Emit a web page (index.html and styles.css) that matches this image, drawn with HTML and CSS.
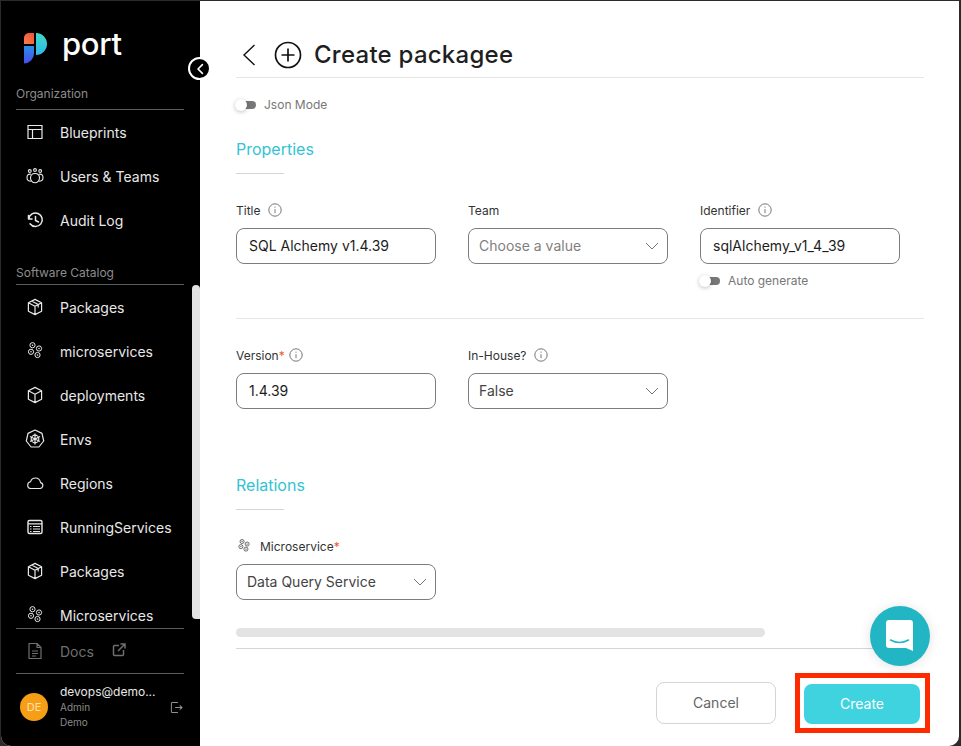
FILE: index.html
```html
<!DOCTYPE html>
<html lang="en">
<head>
<meta charset="utf-8">
<title>Create packagee</title>
<link rel="stylesheet" href="styles.css">
</head>
<body>
<svg class="defs" width="0" height="0" aria-hidden="true">
  <defs>
    <linearGradient id="lg-orange" x1="0" y1="1" x2="1" y2="0"><stop offset="0" stop-color="#f9804a"/><stop offset="1" stop-color="#f0503a"/></linearGradient>
    <linearGradient id="lg-teal" x1="0" y1="0" x2="0" y2="1"><stop offset="0" stop-color="#3fdcc6"/><stop offset="1" stop-color="#2fb6ea"/></linearGradient>
    <linearGradient id="lg-blue" x1="0" y1="0" x2="0" y2="1"><stop offset="0" stop-color="#2a8fe8"/><stop offset="1" stop-color="#4a4cf0"/></linearGradient>
    <symbol id="box" viewBox="0 0 18 18"><path d="M9 1.400l6.600 3.300v8.600L9 16.600l-6.600-3.300V4.700z M2.400 4.700L9 8.200l6.600-3.500 M9 8.200v8.400" fill="none" stroke="currentColor" stroke-width="1.200" stroke-linejoin="round"/></symbol>
    <symbol id="pkg" viewBox="0 0 18 18"><path d="M9 1.400l6.600 3.300v8.600L9 16.600l-6.600-3.300V4.700z M2.400 4.700L9 8.200l6.600-3.500 M9 8.200v8.400 M5.600 3L12.200 6.500v3" fill="none" stroke="currentColor" stroke-width="1.200" stroke-linejoin="round"/></symbol>
    <symbol id="micro" viewBox="0 0 18 18"><g fill="none" stroke="currentColor" stroke-width="1"><circle cx="6.500" cy="3.200" r="2.600"/><circle cx="5" cy="9.800" r="2.600"/><circle cx="13" cy="6.500" r="2.600"/><circle cx="11.500" cy="13" r="2.600"/></g><g fill="currentColor"><circle cx="6.500" cy="3.200" r=".8"/><circle cx="5" cy="9.800" r=".8"/><circle cx="13" cy="6.500" r=".8"/><circle cx="11.500" cy="13" r=".8"/></g></symbol>
    <symbol id="info" viewBox="0 0 14 14"><circle cx="7" cy="7" r="6.200" fill="none" stroke="currentColor" stroke-width=".9"/><path d="M7 6.200v4" stroke="currentColor" stroke-width=".9" fill="none"/><circle cx="7" cy="4.100" r=".6" fill="currentColor"/></symbol>
    <symbol id="chev" viewBox="0 0 14 8"><path d="M1 1l6 6 6-6" fill="none" stroke="currentColor" stroke-width=".9"/></symbol>
  </defs>
</svg>
<div class="app">
  <aside class="sidebar">
    <div class="logo">
      <svg class="logo-mark" viewBox="0 0 24 31" width="24" height="31">
        <path d="M0 11V5a5 5 0 0 1 5-5h5v11z" fill="url(#lg-orange)"/>
        <path d="M12 0a11 11 0 0 1 0 22z" fill="url(#lg-teal)"/>
        <path d="M0 13h10v7.500a10 10 0 0 1-10 10z" fill="url(#lg-blue)"/>
      </svg>
      <span class="logo-text">port</span>
    </div>
    <button class="collapse" aria-label="Collapse">
      <svg viewBox="0 0 10 14" width="8" height="12"><path d="M8 1.500L2.500 7 8 12.500" fill="none" stroke="#fff" stroke-width="2" stroke-linecap="round" stroke-linejoin="round"/></svg>
    </button>
    <div class="section-title org">Organization</div>
    <nav class="nav">
      <a class="nav-item"><svg class="nav-icon" viewBox="0 0 18 18"><path d="M2 2.500h14v13H2z M2 6.500h14 M6.500 6.500v9" fill="none" stroke="currentColor" stroke-width="1.200"/></svg>Blueprints</a>
      <a class="nav-item"><svg class="nav-icon" viewBox="0 0 18 18"><g fill="none" stroke="currentColor" stroke-width="1.100"><circle cx="3.800" cy="4" r="1.400"/><circle cx="9" cy="3" r="1.400"/><circle cx="14.200" cy="4" r="1.400"/><path d="M5 7.200C2 6.800 1 8.500 1 10.500c0 2.500 1.500 3.800 4 3.800"/><path d="M13 7.200c3-.4 4 1.300 4 3.300 0 2.500-1.500 3.800-4 3.800"/><path d="M9 6.500c-3 0-4.500 2-4.500 4.500S6.500 15.800 9 15.800s4.500-2.300 4.500-4.800S12 6.500 9 6.500z"/></g></svg>Users &amp; Teams</a>
      <a class="nav-item"><svg class="nav-icon" viewBox="0 0 18 18"><path d="M2.500 4.500V8H6 M2.700 8A6.800 6.800 0 1 1 4 12.800 M9.500 5.500V9.500L12.500 11" fill="none" stroke="currentColor" stroke-width="1.500" stroke-linecap="round" stroke-linejoin="round"/></svg>Audit Log</a>
    </nav>
    <div class="section-title catalog">Software Catalog</div>
    <div class="catalog-scroll">
      <nav class="nav">
        <a class="nav-item"><svg class="nav-icon"><use href="#pkg"/></svg>Packages</a>
        <a class="nav-item"><svg class="nav-icon"><use href="#micro"/></svg>microservices</a>
        <a class="nav-item"><svg class="nav-icon"><use href="#box"/></svg>deployments</a>
        <a class="nav-item"><svg class="nav-icon big" viewBox="0 0 20 20"><g fill="none" stroke="currentColor" stroke-width="1.200" stroke-linejoin="round"><path d="M10 1l7 3.400 1.700 7.600-4.800 6H6.100l-4.800-6L3 4.400z"/><circle cx="10" cy="10" r="3.800"/><path d="M10 4.500v11 M5 7.500l10 5 M15 7.500l-10 5"/></g></svg>Envs</a>
        <a class="nav-item"><svg class="nav-icon" viewBox="0 0 18 18"><path d="M4.500 14.500h9.500a3 3 0 0 0 .6-5.900C14 6 12 4 9.500 4 7 4 5.200 5.500 4.500 7.800a3.400 3.400 0 0 0 0 6.700z" fill="none" stroke="currentColor" stroke-width="1.100"/></svg>Regions</a>
        <a class="nav-item"><svg class="nav-icon" viewBox="0 0 18 18"><rect x="2" y="2.500" width="14" height="13" rx="1.500" fill="none" stroke="currentColor" stroke-width="1.400"/><path d="M2 5.800h14 M7 8.500h7 M7 11h7 M7 13.500h7 M4 8.500h1.500 M4 11h1.500 M4 13.500h1.500" fill="none" stroke="currentColor" stroke-width="1.200"/></svg>RunningServices</a>
        <a class="nav-item"><svg class="nav-icon"><use href="#pkg"/></svg>Packages</a>
        <a class="nav-item"><svg class="nav-icon"><use href="#micro"/></svg>Microservices</a>
      </nav>
    </div>
    <div class="scroll-thumb"></div>
    <div class="docs">
      <svg class="nav-icon" viewBox="0 0 18 18"><path d="M3 1.500h8l4 4v11H3z M11 1.500v4h4 M6 9h6 M6 11.500h6 M6 14h4" fill="none" stroke="currentColor" stroke-width="1.200" stroke-linejoin="round"/></svg>
      <span>Docs</span>
      <svg class="ext" viewBox="0 0 14 14" width="14" height="14"><path d="M7 2.500H2.500a1 1 0 0 0-1 1v8a1 1 0 0 0 1 1h8a1 1 0 0 0 1-1V7 M6 8L12.500 1.500 M8.500 1h4.500v4.500" fill="none" stroke="currentColor" stroke-width="1.500"/></svg>
    </div>
    <div class="user">
      <div class="avatar">DE</div>
      <div class="user-info">
        <div class="user-name">devops@demo...</div>
        <div class="user-meta">Admin</div>
        <div class="user-meta">Demo</div>
      </div>
      <svg class="logout" viewBox="0 0 14 14" width="13" height="13"><path d="M8.500 1.500H2.500a1 1 0 0 0-1 1v9a1 1 0 0 0 1 1h6 M5.500 7h7.500 M10.500 4.800L13 7l-2.500 2.200" fill="none" stroke="currentColor" stroke-width="1.100"/></svg>
    </div>
  </aside>

  <main class="main">
    <header class="page-header">
      <svg class="back" viewBox="0 0 14 24" width="14" height="24"><path d="M12.500 2L2 12l10.500 10" fill="none" stroke="#111" stroke-width="1.400"/></svg>
      <svg class="plus" viewBox="0 0 28 28" width="28" height="28"><circle cx="14" cy="14" r="12.500" fill="none" stroke="#111" stroke-width="1.700"/><path d="M14 7.500v13 M7.500 14h13" stroke="#111" stroke-width="1.700"/></svg>
      <h1 class="page-title">Create packagee</h1>
    </header>
    <div class="toggle-row json">
      <span class="toggle"><span class="knob"></span></span>
      <span class="toggle-label">Json Mode</span>
    </div>

    <h2 class="group-title properties">Properties</h2>
    <div class="short-rule"></div>

    <div class="form-grid first">
      <div class="field">
        <label class="label">Title <svg class="info"><use href="#info"/></svg></label>
        <div class="control"><span class="value">SQL Alchemy v1.4.39</span></div>
      </div>
      <div class="field">
        <label class="label">Team</label>
        <div class="control select"><span class="placeholder">Choose a value</span><svg class="chev"><use href="#chev"/></svg></div>
      </div>
      <div class="field">
        <label class="label">Identifier <svg class="info"><use href="#info"/></svg></label>
        <div class="control"><span class="value">sqlAlchemy_v1_4_39</span></div>
        <div class="toggle-row auto">
          <span class="toggle"><span class="knob"></span></span>
          <span class="toggle-label">Auto generate</span>
        </div>
      </div>
    </div>
    <div class="rule"></div>
    <div class="form-grid second">
      <div class="field">
        <label class="label">Version<span class="req">*</span> <svg class="info"><use href="#info"/></svg></label>
        <div class="control"><span class="value">1.4.39</span></div>
      </div>
      <div class="field">
        <label class="label">In-House? <svg class="info"><use href="#info"/></svg></label>
        <div class="control select"><span class="selected">False</span><svg class="chev"><use href="#chev"/></svg></div>
      </div>
    </div>

    <h2 class="group-title relations">Relations</h2>
    <div class="short-rule"></div>

    <div class="form-grid third">
      <div class="field">
        <label class="label"><svg class="label-icon"><use href="#micro"/></svg>Microservice<span class="req">*</span></label>
        <div class="control select"><span class="selected">Data Query Service</span><svg class="chev"><use href="#chev"/></svg></div>
      </div>
    </div>

    <div class="h-scroll"></div>
    <div class="footer">
      <button class="btn cancel">Cancel</button>
      <button class="btn create">Create</button>
    </div>
  </main>
</div>
<div class="highlight"></div>
<button class="chat" aria-label="Chat">
  <svg viewBox="0 0 28 32" width="28" height="32"><path d="M3 0h21a3 3 0 0 1 3 3v28l-7-3H3a3 3 0 0 1-3-3V3a3 3 0 0 1 3-3z" fill="#fff"/><path d="M4.500 20c5.500 3 12.500 3 18 0" fill="none" stroke="#22b5c4" stroke-width="1.500" stroke-linecap="round"/></svg>
</button>
</body>
</html>
```

FILE: styles.css
```css
* { box-sizing: border-box; }
html, body { margin: 0; padding: 0; height: 746px; overflow: hidden; background: #2b2b2b; }
body { font-family: Inter, "Liberation Sans", sans-serif; position: relative; width: 961px; }
.defs { position: absolute; }

.app {
  display: flex;
  height: 745px;
  margin-top: 1px;
  margin-left: 1px;
  width: 958px;
  background: #fff;
  border-radius: 0 0 10px 10px;
  overflow: hidden;
}

/* Sidebar */
.sidebar {
  position: relative;
  flex: 0 0 199px;
  background: #000;
  color: #e6e6e6;
  padding-left: 15px;
  display: flex;
  flex-direction: column;
}
.logo { display: flex; align-items: center; height: 31px; margin-top: 32px; margin-left: 8px; gap: 14px; }
.logo-mark { flex: none; }
.logo-text { font-size: 31px; font-weight: 500; color: #fff; line-height: 31px; position: relative; top: -5px; letter-spacing: -0.3px; }
.collapse {
  position: absolute;
  left: 187px;
  top: 56px;
  width: 23px;
  height: 23px;
  padding: 0;
  border-radius: 50%;
  background: #000;
  border: 2px solid #fff;
  display: flex;
  align-items: center;
  justify-content: center;
  z-index: 3;
}
.section-title {
  width: 168px;
  font-size: 12px;
  line-height: 15px;
  color: #8c8c8c;
  border-bottom: 1px solid #5c5c5c;
}
.section-title.org { margin-top: 22px; height: 24px; }
.section-title.catalog { margin-top: 23px; height: 20px; }
.nav { display: flex; flex-direction: column; }
.nav-item {
  display: flex;
  align-items: center;
  height: 44px;
  font-size: 14px;
  font-weight: 400;
  color: #e8e8e8;
  padding-left: 10px;
}
.nav-icon { width: 18px; height: 18px; margin-right: 16px; flex: none; color: #e8e8e8; }
.nav-icon.big { width: 20px; height: 20px; margin-left: -1px; margin-right: 15px; }
.catalog-scroll { height: 343px; overflow: hidden; width: 168px; }
.scroll-thumb {
  position: absolute;
  left: 191px;
  top: 284px;
  width: 8px;
  height: 334px;
  background: #e3e3e3;
  border-radius: 4px 4px 0 4px;
}
.docs {
  width: 168px;
  height: 46px;
  display: flex;
  align-items: center;
  padding-left: 10px;
  border-top: 1px solid #5c5c5c;
  border-bottom: 1px solid #5c5c5c;
  color: #6f6f6f;
  font-size: 14px;
  font-weight: 400;
}
.docs .nav-icon { color: #6f6f6f; }
.ext { margin-left: 18px; position: relative; top: -1px; }
.user { display: flex; align-items: center; width: 172px; margin-top: 10px; position: relative; }
.avatar {
  width: 28px;
  height: 28px;
  border-radius: 50%;
  background: #f59e16;
  color: #ffe1ae;
  font-size: 11px;
  display: flex;
  align-items: center;
  justify-content: center;
  margin-left: 4px;
  flex: none;
}
.user-info { margin-left: 12px; width: 108px; flex: none; }
.user-name { font-size: 12px; font-weight: 400; color: #e8e8e8; line-height: 16px; white-space: nowrap; }
.user-meta { font-size: 10px; color: #8a8a8a; line-height: 15px; }
.logout { color: #8f8f8f; flex: none; margin-left: 2px; }

/* Main */
.main { flex: 1; padding: 0 35px 0 36px; min-width: 0; }
.page-header {
  display: flex;
  align-items: center;
  height: 77px;
  padding-top: 40px;
  padding-bottom: 8px;
  padding-left: 6px;
  border-bottom: 1px solid #e6e6e6;
}
.back { flex: none; }
.plus { margin-left: 18px; flex: none; }
.page-title { margin: 0 0 0 12px; font-size: 24px; line-height: 28px; font-weight: 500; color: #1f1f1f; letter-spacing: .25px; }

.toggle-row { display: flex; align-items: center; }
.toggle { position: relative; height: 8px; background: #777; border-radius: 4px; flex: none; display: block; width: 20px; }
.knob { position: absolute; left: -1px; top: -2px; width: 12px; height: 12px; border-radius: 50%; background: #fff; box-shadow: 0 1px 4px rgba(0,0,0,.25); }
.toggle-label { font-size: 12px; color: #777; margin-left: 8px; line-height: 14px; }
.json { margin-top: 20px; }
.auto { margin-top: 10px; height: 14px; }

.group-title { margin: 0; font-size: 16px; line-height: 20px; font-weight: 400; color: #33c3d3; }
.group-title.properties { margin-top: 27px; }
.group-title.relations { margin-top: 38px; }
.short-rule { width: 48px; height: 1px; background: #d5d5d5; margin-top: 14px; }

.form-grid { display: grid; grid-template-columns: repeat(3, 200px); column-gap: 32px; }
.form-grid.first { margin-top: 28px; height: 116px; }
.form-grid.second { margin-top: 28px; height: 90px; }
.form-grid.third { margin-top: 28px; height: 62px; }
.rule { height: 1px; background: #e6e6ec; }

.label { display: flex; align-items: center; height: 18px; padding-bottom: 2px; font-size: 12px; color: #333; margin-bottom: 8px; white-space: pre; }
.info { width: 14px; height: 14px; margin-left: 4px; color: #666; }
.req { color: #f0563a; }
.label-icon { width: 14px; height: 14px; margin-left: 1px; margin-right: 9px; color: #444; }
.control {
  height: 36px;
  border: 1px solid #7d7d7d;
  border-radius: 8px;
  display: flex;
  align-items: center;
  padding: 0 12px 1px;
  font-size: 14px;
  background: #fff;
}
.control.select { padding: 0 8px 1px 10px; justify-content: space-between; }
.value { color: #1c1c1c; }
.placeholder { color: #7f7f7f; }
.selected { color: #444; }
.chev { width: 14px; height: 8px; color: #666; }

.h-scroll { width: 529px; height: 9px; margin-top: 28px; background: #e3e3e3; border-radius: 5px; }
.footer {
  margin-top: 11px;
  border-top: 1px solid #d6d6d6;
  width: 688px;
  display: flex;
  justify-content: flex-end;
  align-items: flex-start;
  padding-right: 4px;
  gap: 28px;
  padding-top: 33px;
  position: relative;
}
.btn { font-family: inherit; font-size: 14px; border-radius: 8px; padding: 0 0 2px; }
.cancel { width: 120px; height: 42px; background: #fff; border: 1px solid #d4d4d4; color: #666; }
.create { width: 116px; height: 40px; background: #3fd2df; border: 0; color: #fff; margin-top: 2px; }

/* Overlays */
.highlight { position: absolute; left: 795px; top: 673px; width: 135px; height: 60px; border: 5px solid #ff2a00; pointer-events: none; }
.chat {
  position: absolute;
  left: 870px;
  top: 606px;
  width: 60px;
  height: 60px;
  padding: 0;
  border: 0;
  border-radius: 50%;
  background: #22b5c4;
  box-shadow: 0 1px 12px rgba(0,0,0,.12);
  display: flex;
  align-items: center;
  justify-content: center;
}
```
